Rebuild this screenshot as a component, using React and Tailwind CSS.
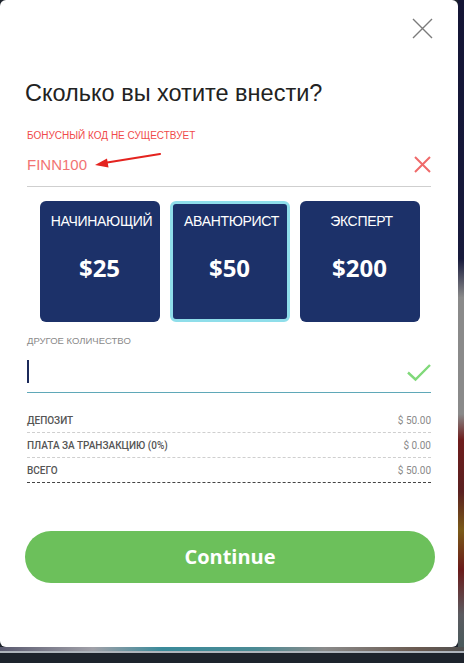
import React from "react";

function Row({ label, value, last }) {
  return (
    <div
      className={`flex h-[25px] items-center justify-between border-b border-dashed ${
        last ? "border-[#444]" : "border-[#cfcfcf]"
      }`}
    >
      <span className="text-[10px] font-medium text-[#555] [font-family:Roboto,'Liberation_Sans',sans-serif]">
        {label}
      </span>
      <span className="text-[10px] text-[#8a8a8a] [font-family:Roboto,'Liberation_Sans',sans-serif]">
        {value}
      </span>
    </div>
  );
}

function Card({ label, price, selected }) {
  return (
    <div
      className={`flex h-[121px] w-[120px] flex-col items-center rounded-[6px] bg-[#1c3169] ${
        selected ? "border-[3px] border-[#8fdeea] pt-[9px]" : "pt-[12px]"
      }`}
    >
      <div className="pl-[4px] text-[14px] leading-[16px] text-white tracking-[-0.3px] [font-family:'Liberation_Sans',Arial,sans-serif]">
        {label}
      </div>
      <div className="mt-[23px] text-[24px] font-bold leading-[32px] text-white [font-family:'Open_Sans',sans-serif]">
        {price}
      </div>
    </div>
  );
}

export default function App() {
  return (
    <div className="flex h-[663px] w-[464px] flex-col overflow-hidden bg-[#1d232c]">
      <div className="flex h-[647px]">
        <div className="relative h-[647px] w-[458px] shrink-0 rounded-[6px] bg-white px-[27px]">
          <div className="flex justify-end pt-[18px] pr-[0px]">
            <svg width="21" height="21" viewBox="0 0 21 21" className="mr-[-2px]">
              <path d="M1 1 L20 20 M20 1 L1 20" stroke="#7b7b7b" strokeWidth="1.4" fill="none" />
            </svg>
          </div>
          <h1 className="-ml-[2px] mt-[41px] text-[23.5px] leading-[26px] text-[#222] [font-family:'Liberation_Sans',Arial,sans-serif]">
            Сколько вы хотите внести?
          </h1>
          <div className="mt-[24px] text-[10px] leading-[12px] text-[#f04a4a] [font-family:'Liberation_Sans',Arial,sans-serif]">
            БОНУСНЫЙ КОД НЕ СУЩЕСТВУЕТ
          </div>
          <div className="mt-[12px] flex h-[33px] items-start justify-between border-b border-[#cfcfcf]">
            <span className="mt-[1px] text-[15px] leading-[20px] text-[#f27373] [font-family:'Liberation_Sans',Arial,sans-serif]">
              FINN100
            </span>
            <svg width="17" height="17" viewBox="0 0 17 17" className="mt-[2px]">
              <path d="M1 1 L16 16 M16 1 L1 16" stroke="#ef6a6a" strokeWidth="2" fill="none" />
            </svg>
          </div>
          <svg
            className="absolute left-[92px] top-[150px]"
            width="72"
            height="22"
            viewBox="0 0 72 22"
          >
            <path d="M68 4 L12 13" stroke="#e4231f" strokeWidth="2.2" strokeLinecap="round" />
            <path d="M3 15 L15 8.5 L16.5 17.5 Z" fill="#e4231f" />
          </svg>

          <div className="mt-[14px] flex justify-center gap-[10px] pl-[1px]">
            <Card label="НАЧИНАЮЩИЙ" price="$25" />
            <Card label="АВАНТЮРИСТ" price="$50" selected />
            <Card label="ЭКСПЕРТ" price="$200" />
          </div>

          <div className="mt-[13px] text-[9.5px] leading-[12px] text-[#8a8a8a] [font-family:'Liberation_Sans',Arial,sans-serif]">
            ДРУГОЕ КОЛИЧЕСТВО
          </div>
          <div className="mt-[7px] flex h-[39px] items-start justify-between border-b border-[#5fa8b8]">
            <div className="mt-[6px] h-[23px] w-[1.5px] bg-[#1c2a5a]" />
            <svg width="24" height="18" viewBox="0 0 24 18" className="mt-[10px]">
              <path d="M1 8.5 L8.5 15.5 L23 1" stroke="#80d97a" strokeWidth="2.4" fill="none" />
            </svg>
          </div>

          <div className="mt-[15px]">
            <Row label="ДЕПОЗИТ" value="$ 50.00" />
            <Row label="ПЛАТА ЗА ТРАНЗАКЦИЮ (0%)" value="$ 0.00" />
            <Row label="ВСЕГО" value="$ 50.00" last />
          </div>

          <button className="-mx-[2px] mt-[48px] flex h-[52px] w-[410px] items-center justify-center rounded-full bg-[#6cc05b] text-[20px] font-bold text-white [font-family:'Open_Sans',sans-serif]">
            Continue
          </button>
        </div>
        <div className="flex-1 bg-[linear-gradient(to_bottom,#141535_0%,#171a3c_40%,#8a8a8a_46%,#8a8a8a_64%,#6e1c1c_68%,#5a2020_76%,#7a5a18_82%,#6a1a1a_88%,#5b5b60_95%,#4a5a5c_100%)]" />
      </div>
      <div className="h-[4px] bg-[linear-gradient(to_right,#5a5a70,#a0a0a8_20%,#3a8a9a_35%,#4a8a94_55%,#8a8a8a_70%,#6a5a50_90%,#505050)]" />
      <div className="h-[2px] bg-[#aeb4bc]" />
      <div className="flex-1 bg-[#1d232c]" />
    </div>
  );
}
